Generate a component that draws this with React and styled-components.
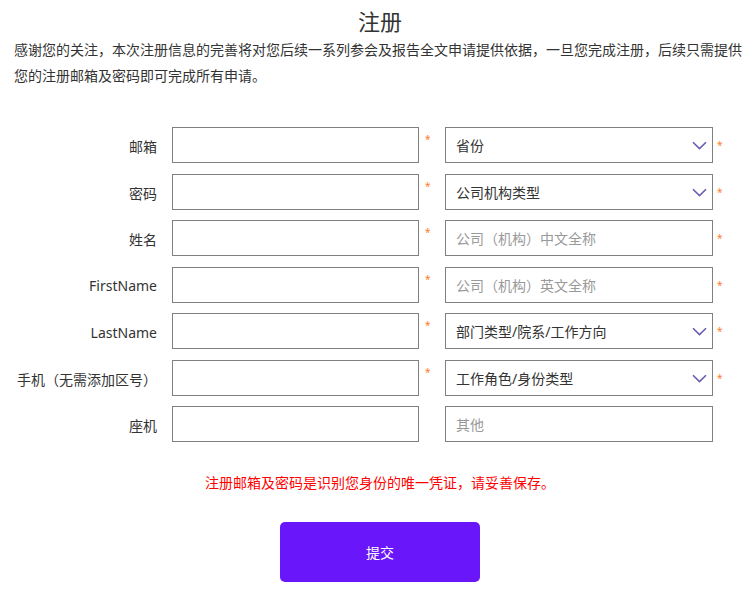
import React from "react";
import styled, { createGlobalStyle } from "styled-components";

const Global = createGlobalStyle`
  html, body { margin: 0; padding: 0; background: #fff; }
  body { font-family: "Noto Sans", "Noto Sans CJK SC", sans-serif; color: #333; }
  * { box-sizing: border-box; }
`;

const Page = styled.div`
  width: 732px;
  margin-left: 14px;
  padding-top: 6px;
  padding-bottom: 7px;
`;

const Title = styled.h1`
  margin: 0 0 1px;
  font-size: 22px;
  line-height: 30px;
  font-weight: 400;
  text-align: center;
  color: #333;
`;

const Intro = styled.p`
  margin: 0;
  font-size: 14px;
  line-height: 26px;
  color: #333;
`;

const Form = styled.form`
  margin-top: 38px;
  display: flex;
  flex-direction: column;
  gap: 10.5px;
`;

const Row = styled.div`
  display: grid;
  grid-template-columns: 158px 247px 26px 268px 26px;
  align-items: stretch;
  height: 36px;
`;

const Label = styled.label`
  display: flex;
  align-items: center;
  justify-content: flex-end;
  padding-right: 15px;
  padding-top: 2px;
  font-size: 14px;
  color: #333;
  white-space: nowrap;
`;

const Field = styled.div`
  position: relative;
  display: flex;
  align-items: center;
  border: 1px solid #808080;
  background: #fff;
  padding: 0 10px;
  font-size: 14px;
  color: ${(p) => (p.$placeholder ? "#999" : "#333")};
`;

const Chevron = styled.svg`
  position: absolute;
  right: 5px;
  top: 50%;
  margin-top: -4px;
  width: 15px;
  height: 9px;
`;

const Star = styled.span`
  font-size: 10px;
  line-height: 1;
  color: #ff7a2a;
  padding-left: ${(p) => (p.$right ? "4px" : "6px")};
  padding-top: ${(p) => (p.$right ? "13px" : "7px")};
`;

const Notice = styled.p`
  margin: 31px 0 0;
  font-size: 14px;
  line-height: 20px;
  color: #ff0000;
  text-align: center;
`;

const SubmitWrap = styled.div`
  display: flex;
  justify-content: center;
  margin-top: 29px;
`;

const Submit = styled.button`
  width: 200px;
  height: 60px;
  border: none;
  border-radius: 5px;
  background: #6a16fb;
  color: #fff;
  font-family: inherit;
  font-size: 14px;
  cursor: pointer;
`;

const ChevronIcon = () => (
  <Chevron viewBox="0 0 15 9" fill="none">
    <path d="M1 1.2 L7.5 7.6 L14 1.2" stroke="#6a5cb0" strokeWidth="1.6" />
  </Chevron>
);

const rows = [
  { label: "邮箱", lreq: true, right: "省份", select: true, rreq: true },
  { label: "密码", lreq: true, right: "公司机构类型", select: true, rreq: true },
  { label: "姓名", lreq: true, right: "公司（机构）中文全称", placeholder: true, rreq: true },
  { label: "FirstName", lreq: true, right: "公司（机构）英文全称", placeholder: true, rreq: true },
  { label: "LastName", lreq: true, right: "部门类型/院系/工作方向", select: true, rreq: true },
  { label: "手机（无需添加区号）", lreq: true, right: "工作角色/身份类型", select: true, rreq: true },
  { label: "座机", lreq: false, right: "其他", placeholder: true, rreq: false },
];

export default function App() {
  return (
    <>
      <Global />
      <Page>
        <Title>注册</Title>
        <Intro>
          感谢您的关注，本次注册信息的完善将对您后续一系列参会及报告全文申请提供依据，一旦您完成注册，后续只需提供您的注册邮箱及密码即可完成所有申请。
        </Intro>
        <Form onSubmit={(e) => e.preventDefault()}>
          {rows.map((r) => (
            <Row key={r.label}>
              <Label>{r.label}</Label>
              <Field />
              {r.lreq ? <Star>*</Star> : <span />}
              <Field $placeholder={r.placeholder}>
                {r.right}
                {r.select && <ChevronIcon />}
              </Field>
              {r.rreq ? <Star $right>*</Star> : <span />}
            </Row>
          ))}
        </Form>
        <Notice>注册邮箱及密码是识别您身份的唯一凭证，请妥善保存。</Notice>
        <SubmitWrap>
          <Submit type="button">提交</Submit>
        </SubmitWrap>
      </Page>
    </>
  );
}
